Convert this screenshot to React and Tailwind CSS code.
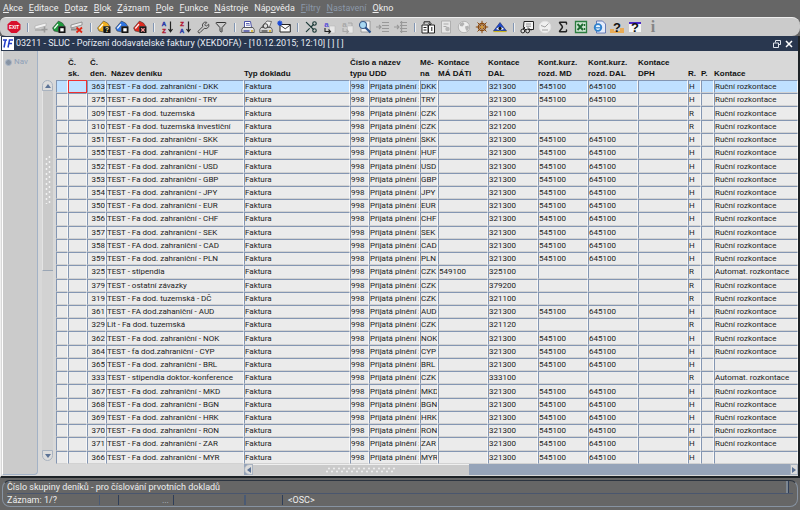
import React, { useState } from "react";
import { Wrench, Filter, Scissors, Sigma } from "lucide-react";

const FX = "TEST - Fa dod. zahraniční - ";

// foreign currency journals share accounts, only number, name and currency differ
const foreign = (den, mena, nazev = FX + mena, kontace = "Ruční rozkontace") => ({
  den, nazev, mena, dati: "", dal: "321300", md: "545100", kdal: "645100", r: "H", kontace,
});

const local = (den, nazev, dal, dati = "", kontace = "Ruční rozkontace") => ({
  den, nazev, mena: "CZK", dati, dal, md: "", kdal: "", r: "R", kontace,
});

const initialRows = [
  foreign("363", "DKK"),
  foreign("375", "TRY"),
  local("309", "TEST - Fa dod. tuzemská", "321100"),
  local("310", "TEST - Fa dod. tuzemská investiční", "321200"),
  foreign("351", "SKK"),
  foreign("355", "HUF"),
  foreign("352", "USD"),
  foreign("353", "GBP"),
  foreign("354", "JPY"),
  foreign("350", "EUR"),
  foreign("356", "CHF"),
  foreign("357", "SEK"),
  foreign("358", "CAD", "TEST - FA dod. zahraniční - CAD"),
  foreign("359", "PLN"),
  local("325", "TEST - stipendia", "325100", "549100", "Automat. rozkontace"),
  local("379", "TEST - ostatní závazky", "379200"),
  local("319", "TEST - Fa dod. tuzemská - DČ", "321100"),
  foreign("361", "AUD", "TEST - FA dod.zahaniční - AUD"),
  local("329", "Lit - Fa dod. tuzemská", "321120"),
  foreign("362", "NOK"),
  foreign("364", "CYP", "TEST - fa dod.zahraniční - CYP"),
  foreign("365", "BRL", FX + "BRL", ""),
  local("333", "TEST - stipendia doktor.-konference", "333100", "", "Automat. rozkontace"),
  foreign("367", "MKD"),
  foreign("368", "BGN"),
  foreign("369", "HRK"),
  foreign("370", "RON"),
  foreign("371", "ZAR"),
  foreign("366", "MYR", FX + "MYR", ""),
];

const columns = [
  { key: "mark", label: "Označení", width: "w-[12px]" },
  { key: "sk", label: "Č. sk.", width: "w-[19px]" },
  { key: "den", label: "Č. den.", width: "w-[19px]", align: "text-right" },
  { key: "nazev", label: "Název deníku", width: "w-[138px]" },
  { key: "typ", label: "Typ dokladu", width: "w-[106px]" },
  { key: "cislo", label: "Číslo typu", width: "w-[19px]" },
  { key: "udd", label: "Název UDD", width: "w-[51px]" },
  { key: "mena", label: "Měna", width: "w-[18px]" },
  { key: "dati", label: "Kontace MÁ DÁTI", width: "w-[50px]" },
  { key: "dal", label: "Kontace DAL", width: "w-[50px]" },
  { key: "md", label: "Kont.kurz. rozd. MD", width: "w-[50px]" },
  { key: "kdal", label: "Kont.kurz. rozd. DAL", width: "w-[50px]" },
  { key: "dph", label: "Kontace DPH", width: "w-[50px]" },
  { key: "r", label: "R.", width: "w-[13px]" },
  { key: "p", label: "P.", width: "w-[13px]" },
  { key: "kontace", label: "Kontace", width: "" },
];

const headers = [
  { lines: ["", ""] },
  { lines: ["Č.", "sk."] },
  { lines: ["Č.", "den."], pad: "pl-[3px]" },
  { lines: ["", "Název deníku"], pad: "pl-[5px]" },
  { lines: ["", "Typ dokladu"] },
  { lines: ["Číslo a název", "typu UDD"], span: 2 },
  { lines: ["Mě-", "na"] },
  { lines: ["Kontace", "MÁ DÁTI"] },
  { lines: ["Kontace", "DAL"] },
  { lines: ["Kont.kurz.", "rozd. MD"] },
  { lines: ["Kont.kurz.", "rozd. DAL"] },
  { lines: ["Kontace", "DPH"] },
  { lines: ["", "R."] },
  { lines: ["", "P."] },
  { lines: ["", "Kontace"] },
];

const menu = [
  { key: "A", rest: "kce" },
  { key: "E", rest: "ditace" },
  { key: "D", rest: "otaz" },
  { key: "B", rest: "lok" },
  { key: "Z", rest: "áznam" },
  { key: "P", rest: "ole" },
  { key: "F", rest: "unkce" },
  { key: "N", rest: "ástroje" },
  { pre: "Náp", key: "o", rest: "věda" },
  { key: "F", rest: "iltry", disabled: true },
  { key: "N", rest: "astavení", disabled: true },
  { key: "O", rest: "kno" },
];

const Svg = ({ children }) => (
  <svg viewBox="0 0 14 14" width="14" height="14" aria-hidden="true">{children}</svg>
);

const ExitIcon = () => (
  <Svg>
    <path d="M4.3 1h5.4L13.5 4.3v5.2L9.7 13H4.3L.5 9.5V4.3z" fill="#d8102c" />
    <text x="7" y="8.8" textAnchor="middle" fontSize="4.6" fontWeight="700" fill="#fff">EXIT</text>
  </Svg>
);

const AddRowIcon = () => (
  <Svg>
    <path d="M1 6l11-3v3L1 9z" fill="#f2f2f2" stroke="#aaa" strokeWidth=".6" />
    <path d="M1 9h9v2H1z" fill="#b0b0b0" />
    <path d="M10.5 6.5v6M7.5 9.5h6" stroke="#9a9a9a" strokeWidth="1.6" />
  </Svg>
);

const RemoveRowIcon = () => (
  <Svg>
    <path d="M1 5l11-3v3L1 8z" fill="#eee" stroke="#777" strokeWidth=".7" />
    <path d="M1 8.5h7v2H1z" fill="#8a8a8a" />
    <path d="M6.5 7.5l5.5 5M12 7.5l-5.5 5" stroke="#e02412" strokeWidth="1.7" />
  </Svg>
);

const HouseIcon = ({ color, mark }) => (
  <Svg>
    <path d="M.5 8L6.5 1l4 2 2.5 3.5H6.5V12L2 11z" fill={color} stroke="#333" strokeWidth=".5" />
    <path d="M2.3 8.5L6 4.2" stroke="#fff" strokeWidth="1.2" />
    <path d="M6.5 6.5h7V13h-7z" fill="#151515" />
    {mark === "play" && <path d="M8.3 8.2h3.4v3.2H8.3z" fill="#fff" />}
    {mark === "x" && <path d="M8.2 8.2l3.4 3.4M11.6 8.2l-3.4 3.4" stroke="#f99" strokeWidth="1.3" />}
    {mark === "?" && (
      <text x="10" y="12" textAnchor="middle" fontSize="6.5" fontWeight="700" fill="#ffe9a0">?</text>
    )}
  </Svg>
);

const letterColor = (letter) => (letter === "A" ? "#2638a8" : "#b01830");

const SortIcon = ({ top, bottom }) => (
  <Svg>
    <text x="4" y="5.8" textAnchor="middle" fontSize="6" fontWeight="700" fill={letterColor(top)} stroke={letterColor(top)} strokeWidth=".4">{top}</text>
    <text x="4" y="13" textAnchor="middle" fontSize="6" fontWeight="700" fill={letterColor(bottom)} stroke={letterColor(bottom)} strokeWidth=".4">{bottom}</text>
    <path d="M10.5 1.5v10M8.5 9l2 2.8 2-2.8" fill="none" stroke="#222" strokeWidth="1.2" />
  </Svg>
);

const PrinterIcon = () => (
  <Svg>
    <path d="M3.5 1.5h6l1 6h-7z" fill="#fff" stroke="#3b43a0" strokeWidth=".9" />
    <path d="M5 3.5h3.5M5 5.2h4" stroke="#3b43a0" strokeWidth=".8" />
    <path d="M2 7.5h10l1.2 2v3H.8v-3z" fill="#e4e4e4" stroke="#444" strokeWidth=".8" />
    <path d="M2.5 11h6" stroke="#2d349a" strokeWidth="1.3" />
    <path d="M10 11h2" stroke="#d9ae10" strokeWidth="1.3" />
  </Svg>
);

const PreviewIcon = () => (
  <Svg>
    <path d="M2 7.5h10l1.2 2v3H.8v-3z" fill="#d6d6d6" stroke="#444" strokeWidth=".8" />
    <path d="M3 6.5L8 1l4.5.5-2 5.5z" fill="#efefef" stroke="#555" strokeWidth=".8" />
    <circle cx="6.5" cy="6" r="2.3" fill="#ddd" stroke="#333" strokeWidth=".9" />
    <path d="M2.5 11h6" stroke="#333" strokeWidth="1.2" />
    <path d="M10 11h2" stroke="#d9ae10" strokeWidth="1.3" />
  </Svg>
);

const MailIcon = () => (
  <Svg>
    <path d="M3 4.5h10.3v7.5H3z" fill="#fafafa" stroke="#222" strokeWidth="1" />
    <path d="M3 5l5.2 3.8L13.3 5" fill="none" stroke="#222" strokeWidth=".9" />
    <path d="M2.8.5v5.4M.2 3.2h5.2M1 1.3l3.6 3.8M4.6 1.3L1 5.1" stroke="#1648d8" strokeWidth="1.2" />
  </Svg>
);

const CopyTextIcon = ({ muted }) => (
  <Svg>
    <text x="4.5" y="6.5" textAnchor="middle" fontSize="8" fontWeight="700" fill={muted ? "#a8a8a8" : "#5a50d8"}>a</text>
    <path d="M7.5 6H13v7H7.5z" fill="#e8e8e8" stroke="#bbb" strokeWidth=".6" />
    <path d="M3 8v3.5h5M6.5 9.5l2 2-2 2" fill="none" stroke={muted ? "#a8a8a8" : "#222"} strokeWidth="1.1" />
    {muted && <path d="M8 3h4v3" fill="none" stroke="#a8a8a8" strokeWidth="1" />}
  </Svg>
);

const FindIcon = () => (
  <Svg>
    <path d="M3 1h9v11H3z" fill="#f2f2f2" stroke="#8a8a8a" strokeWidth=".8" />
    <circle cx="5" cy="5" r="3.5" fill="#a8d8f2" stroke="#3a5a88" strokeWidth="1.1" />
    <path d="M7.5 7.5l5 5" stroke="#28508c" strokeWidth="2.2" />
  </Svg>
);

const ListIcon = ({ vertical }) => (
  <Svg>
    <path d="M6 2.5h7M6 5.5h7M6 8.5h7M6 11.5h7" stroke="#999" strokeWidth="1.1" />
    <path d="M0 7h5M3 5l2 2-2 2" fill="none" stroke="#999" strokeWidth="1.1" />
    {vertical && <path d="M7.5 1v12" stroke="#999" strokeWidth="1.3" />}
  </Svg>
);

const CardsIcon = () => (
  <Svg>
    <path d="M1 5h6v8H1zM7.5 5h6v8h-6z" fill="#fff" stroke="#222" strokeWidth="1" />
    <path d="M3 4V1.8h6V5M7.5 3.5L9 5.2l1.5-1.7M2.5 7.5h3M2.5 10h3M10.8 7v4" fill="none" stroke="#222" strokeWidth="1" />
  </Svg>
);

const PageIcon = () => (
  <Svg>
    <path d="M2.5 1h9v12h-9z" fill="#e6e6e6" stroke="#aaa" strokeWidth=".9" />
    <path d="M4.5 4h5M4.5 6.5h3" stroke="#aaa" />
    <circle cx="8.5" cy="9" r="2.2" fill="#b5b5b5" />
  </Svg>
);

const GlobeIcon = () => (
  <Svg>
    <circle cx="7" cy="7" r="5.7" fill="#ededed" stroke="#a8a8a8" strokeWidth=".8" />
    <path d="M3 3.5l3-1.5 1.5 2-2 2.5L3 6zM8 6.5l3.5-1 .5 2.5-2 3.5L8.5 9z" fill="#b2b2b2" />
  </Svg>
);

const WheelIcon = () => (
  <Svg>
    <circle cx="7" cy="7" r="3.6" fill="none" stroke="#8a4a10" strokeWidth="1.5" />
    <path d="M7 .8v12.4M.8 7h12.4M2.5 2.5l9 9M11.5 2.5l-9 9" stroke="#8a4a10" strokeWidth="1" />
    <circle cx="7" cy="7" r="1.5" fill="#d89a30" />
  </Svg>
);

const EyeIcon = () => (
  <Svg>
    <path d="M7 2.5L13.5 11H.5z" fill="#1f48c8" stroke="#1b2a68" strokeWidth=".6" />
    <path d="M3 9Q7 5 11 9 7 11.3 3 9z" fill="#fff" />
    <circle cx="7" cy="8.4" r="1.6" fill="#111" />
    <path d="M.5 11.5h13" stroke="#c9b31e" strokeWidth="1.2" />
  </Svg>
);

const TruckIcon = () => (
  <Svg>
    <path d="M4 1.5h9.5v8H5L3.5 7z" fill="#f4f4f4" stroke="#222" strokeWidth="1" />
    <path d="M6 4h5M6 6.2h5" stroke="#777" strokeWidth=".8" />
    <path d="M1 11l4-4M8 7.5l3 3" stroke="#222" strokeWidth="1" />
    <circle cx="2.8" cy="11" r="1.9" fill="#ddd" stroke="#222" strokeWidth="1" />
    <circle cx="7.6" cy="11" r="1.9" fill="#ddd" stroke="#222" strokeWidth="1" />
  </Svg>
);

const ClockIcon = () => (
  <Svg>
    <circle cx="7" cy="7" r="5.8" fill="#efefef" stroke="#e2e2e2" strokeWidth="1" />
    <path d="M3 5.5l4 1.5 3.5-3.5M4 10h6" fill="none" stroke="#999" strokeWidth=".9" />
  </Svg>
);

const ExcelIcon = () => (
  <Svg>
    <path d="M1.5 1.5h11v11h-11z" fill="#cfe6d4" stroke="#2c7d40" strokeWidth="1.3" />
    <path d="M3.5 4l5.5 6M9 4l-5.5 6" stroke="#1d6a30" strokeWidth="1.9" />
    <path d="M10.5 4v2M10.5 8v2" stroke="#1d6a30" strokeWidth="1.4" />
  </Svg>
);

const BrowserIcon = () => (
  <Svg>
    <path d="M4.5 1h6l3 3v9h-9z" fill="#e4ebfb" stroke="#4a63a8" strokeWidth=".8" />
    <circle cx="6" cy="7.5" r="3.3" fill="#eaf5ff" stroke="#2e80cc" strokeWidth="1.8" />
    <path d="M3 7.8h6" stroke="#2e80cc" strokeWidth="1.2" />
  </Svg>
);

const HelpIcon = ({ framed }) => (
  <Svg>
    {framed ? (
      <path d="M1 2h12v10H1z" fill="#f5f5f5" />
    ) : (
      <path d="M0 9h4v4H0zM10 8h4v5h-4zM4 11h6v2H4z" fill="#e8ab55" />
    )}
    {framed && <path d="M1 2h12v2H1z" fill="#4a28c8" />}
    <text x="7" y="12.3" textAnchor="middle" fontSize="13" fontWeight="700" fill="#111">?</text>
  </Svg>
);

const toolGroups = [
  [["Konec", <ExitIcon />]],
  [
    ["Nový záznam", <AddRowIcon />],
    ["Uložit", <HouseIcon color="#1e9a3c" mark="play" />],
    ["Smazat záznam", <RemoveRowIcon />],
  ],
  [
    ["Zadat dotaz", <HouseIcon color="#f0b020" mark="?" />],
    ["Provést dotaz", <HouseIcon color="#2f74e0" mark="play" />],
    ["Zrušit dotaz", <HouseIcon color="#dc2a20" mark="x" />],
  ],
  [
    ["Seřadit vzestupně", <SortIcon top="A" bottom="Z" />],
    ["Seřadit sestupně", <SortIcon top="Z" bottom="A" />],
    ["Nástroje", <Wrench size={13} strokeWidth={1.6} className="text-[#333]" />],
    ["Filtr", <Filter size={12} strokeWidth={2} className="text-[#333]" />],
  ],
  [
    ["Tisk", <PrinterIcon />],
    ["Náhled", <PreviewIcon />],
    ["Odeslat", <MailIcon />],
  ],
  [
    ["Vyjmout", <Scissors size={14} strokeWidth={2} className="-scale-x-100 text-[#1c3a38]" />],
    ["Kopírovat", <CopyTextIcon />],
    ["Vložit", <CopyTextIcon muted />],
    ["Hledat", <FindIcon />],
    ["Odsadit", <ListIcon />],
    ["Sloupce", <ListIcon vertical />],
  ],
  [
    ["Karty", <CardsIcon />],
    ["Dokument", <PageIcon />],
    ["Web", <GlobeIcon />],
    ["Navigace", <WheelIcon />],
    ["Zobrazit", <EyeIcon />],
  ],
  [
    ["Doprava", <TruckIcon />],
    ["Čas", <ClockIcon />],
    ["Součet", <Sigma size={14} strokeWidth={2.5} className="text-[#222]" />],
    ["Excel", <ExcelIcon />],
    ["Prohlížeč", <BrowserIcon />],
    ["Nápověda", <HelpIcon />],
    ["Nápověda k oknu", <HelpIcon framed />],
    ["Informace", <span className="font-['Liberation_Serif',serif] text-[16px] leading-[14px] font-bold text-[#858585]">i</span>],
  ],
];

const MenuBar = () => (
  <nav className="flex h-[17px] items-center gap-[6px] pl-[3px] text-[9px] leading-[11px] text-[#eee]">
    {menu.map((item, i) => (
      <button
        key={i}
        disabled={item.disabled}
        className={`whitespace-nowrap ${item.disabled ? "text-[#8b98a8]" : ""}`}
      >
        {item.pre}
        <span className="underline">{item.key}</span>
        {item.rest}
      </button>
    ))}
  </nav>
);

const Toolbar = () => (
  <div className="flex h-[19px] items-center rounded-r-lg rounded-l-md border-t border-[#eee] bg-[#cbcbcb] pl-[5px] font-['Liberation_Sans',Arial,sans-serif]">
    {toolGroups.map((group, g) => (
      <React.Fragment key={g}>
        {g > 0 && (
          <div className="flex w-[9px] justify-center">
            <div className="h-[9px] w-[2px] border-l border-[#8296b4] bg-[#eee]"></div>
          </div>
        )}
        {group.map(([label, icon]) => (
          <button key={label} aria-label={label} className="flex h-[17px] w-[18px] items-center justify-center">
            {icon}
          </button>
        ))}
      </React.Fragment>
    ))}
  </div>
);

const TitleBar = () => (
  <header className="flex h-[15px] items-center bg-[#29374f] pr-[3px] text-white">
    <svg viewBox="0 0 12 13" width="12" height="13" className="ml-px shrink-0" aria-hidden="true">
      <path d="M0 0h12v13H0z" fill="#fff" />
      <path d="M1 3h4M3.5 3L2 10.5M11 3H7.5L6 10.5M6.8 6.5H10" fill="none" stroke="#2540c8" strokeWidth="1.5" />
    </svg>
    <h1 className="ml-[2px] flex-1 truncate text-[9px] leading-[13px] text-[#e8edf5]">
      03211 - SLUC - Pořízení dodavatelské faktury (XEKDOFA) - [10.12.2015; 12:10] [ ] [ ]
    </h1>
    <button aria-label="Obnovit" className="px-[2px]">
      <svg viewBox="0 0 8 8" width="8" height="8">
        <path d="M2.5 2.5v-2h5v4h-2M.5 3h5v4.5h-5z" fill="none" stroke="#dfe4ec" />
      </svg>
    </button>
    <button aria-label="Zavřít" className="px-[2px]">
      <svg viewBox="0 0 8 8" width="8" height="8">
        <path d="M1 1l6 6M7 1L1 7" stroke="#fff" strokeWidth="1.5" />
      </svg>
    </button>
  </header>
);

const Grip = ({ vertical }) => (
  <svg
    viewBox={vertical ? "0 0 6 48" : "0 0 70 6"}
    width={vertical ? 6 : 70}
    height={vertical ? 48 : 6}
    aria-hidden="true"
  >
    {Array.from({ length: vertical ? 10 : 14 }).map((_, i) => {
      const a = i * 5 + 1;
      return vertical ? (
        <g key={i} fill="#f4f4f4">
          <circle cx="4.5" cy={a} r="0.9" />
          <circle cx="1.5" cy={a + 2} r="0.9" />
        </g>
      ) : (
        <g key={i} fill="#f4f4f4">
          <circle cx={a + 2} cy="1.5" r="0.9" />
          <circle cx={a} cy="4.5" r="0.9" />
        </g>
      );
    })}
  </svg>
);

const ScrollButton = ({ label, points, className }) => (
  <button
    aria-label={label}
    className={`flex shrink-0 items-center justify-center border border-[#a9b3c0] bg-[#dcdcdc] ${className}`}
  >
    <svg viewBox="0 0 6 6" width="6" height="6">
      <polygon points={points} fill="#5c7396" />
    </svg>
  </button>
);

const JournalTable = ({ rows, selected, onSelect, onChange }) => (
  <table className="h-[413px] w-full table-fixed border-separate border-spacing-0 text-[8px] text-[#222]">
    <colgroup>
      {columns.map((col) => (
        <col key={col.key} className={col.width} />
      ))}
    </colgroup>
    <thead className="font-['Liberation_Sans',Arial,sans-serif]">
      <tr className="h-[29px]">
        {headers.map((head, i) => (
          <th
            key={i}
            colSpan={head.span || 1}
            className={`p-0 pt-[6px] text-left align-top leading-[11px] font-bold whitespace-nowrap text-[#111] ${head.pad || ""}`}
          >
            <span className="block h-[11px]">{head.lines[0]}</span>
            <span className="block h-[11px]">{head.lines[1]}</span>
          </th>
        ))}
      </tr>
    </thead>
    <tbody>
      {rows.map((row, i) => (
        <tr key={row.den} onClick={() => onSelect(i)}>
          {columns.map((col) => (
            <td
              key={col.key}
              className={`border p-0 ${
                i === selected && col.key === "sk"
                  ? "border-[#f03030]"
                  : "border-t-[#8496b2] border-r-[#f8f8f8] border-b-[#d2d2d2] border-l-[#8496b2]"
              } ${i === selected ? "bg-[#bfe0ff]" : "bg-[#ebebeb]"}`}
            >
              <input
                aria-label={`${col.label} ${i + 1}`}
                value={row[col.key] || ""}
                onChange={(e) => onChange(i, col.key, e.target.value)}
                className={`block h-[11px] w-full bg-transparent p-0 leading-[11px] outline-none ${
                  col.align || ""
                }`}
              />
            </td>
          ))}
        </tr>
      ))}
    </tbody>
  </table>
);

const StatusBar = () => (
  <footer className="mx-[2px] mt-[2px] rounded-lg border border-[#8793a2] border-t-[#2c3440] px-1 text-[9px] text-[#eee]">
    <div className="flex h-[13px] items-center justify-between border-b border-[#4a566e]">
      <span className="leading-[12px]">Číslo skupiny deníků - pro číslování prvotních dokladů</span>
      <span className="mr-1 h-[12px] w-[3px] border-r border-[#2f3e58] bg-[#7d8792]"></span>
    </div>
    <div className="flex h-[12px] items-center leading-[11px]">
      <span className="w-[92px]">Záznam: 1/?</span>
      <span className="h-[10px] w-[19px] border-l border-[#4a5a74]"></span>
      <span className="h-[10px] w-[55px] border-l border-[#2f3e58] pr-1 text-right text-[#b5bdc8]">...</span>
      <span className="h-[10px] w-[71px] border-l border-[#2f3e58]"></span>
      <span className="h-[10px] w-[38px] border-l-2 border-[#4a5a74]"></span>
      <span className="flex h-[10px] items-center border-l border-[#2f3e58] pl-[5px]">&lt;OSC&gt;</span>
    </div>
  </footer>
);

export default function App() {
  const [rows, setRows] = useState(
    initialRows.map((row) => ({ ...row, typ: "Faktura", cislo: "998", udd: "Přijatá plnění z" }))
  );
  const [selected, setSelected] = useState(0);

  const handleChange = (index, key, value) => {
    setRows(rows.map((row, i) => (i === index ? { ...row, [key]: value } : row)));
  };

  return (
    <div className="min-h-screen bg-[#666] font-[Roboto,Arial,sans-serif]">
      <MenuBar />
      <Toolbar />

      <div className="border-r-2 border-b-2 border-l border-[#1d2226] border-l-[#f0f0f0]">
        <TitleBar />
        <main className="flex bg-[#d8d8d8] pb-[1px]">
          <aside className="ml-px w-[36px] shrink-0 rounded-br-sm border-r border-b border-l border-[#a3b2c6] border-l-white bg-[#cbcbcb]">
            <label className="mt-[6px] ml-[2px] flex items-center gap-[2px] text-[8px] leading-[10px] text-[#8ea0b8]">
              <input
                type="radio"
                name="nav"
                className="h-[7px] w-[7px] appearance-none rounded-full border border-[#a9b6c8] bg-[#8793a3]"
              />
              Nav
            </label>
          </aside>

          <div className="flex w-[18px] shrink-0 flex-col items-start pt-[29px] pb-[14px] pl-[4px]">
            <ScrollButton label="Nahoru" points="3,1 6,5 0,5" className="h-[11px] w-[11px] rounded-t-md" />
            <div className="flex w-[11px] flex-1 flex-col bg-[#d2d2d2]">
              <div className="flex h-1/2 items-center justify-center border-b border-l border-[#9aa6b5] border-l-[#e4e4e4] bg-[#cacaca]">
                <Grip vertical />
              </div>
            </div>
            <ScrollButton label="Dolů" points="0,1 6,1 3,5" className="h-[11px] w-[11px] rounded-b-md" />
          </div>

          <div className="min-w-0 flex-1">
            <JournalTable rows={rows} selected={selected} onSelect={setSelected} onChange={handleChange} />
            <div className="ml-[188px] flex h-[11px] bg-[#96a4b9]">
              <ScrollButton label="Vlevo" points="5,0 5,6 1,3" className="w-[9px] rounded-l-md" />
              <div className="flex w-[39%] items-center justify-center border-t border-[#efefef] bg-[#cacaca]">
                <Grip />
              </div>
              <div className="flex-1"></div>
              <ScrollButton label="Vpravo" points="1,0 1,6 5,3" className="w-[8px]" />
            </div>
          </div>
        </main>
      </div>

      <StatusBar />
    </div>
  );
}
